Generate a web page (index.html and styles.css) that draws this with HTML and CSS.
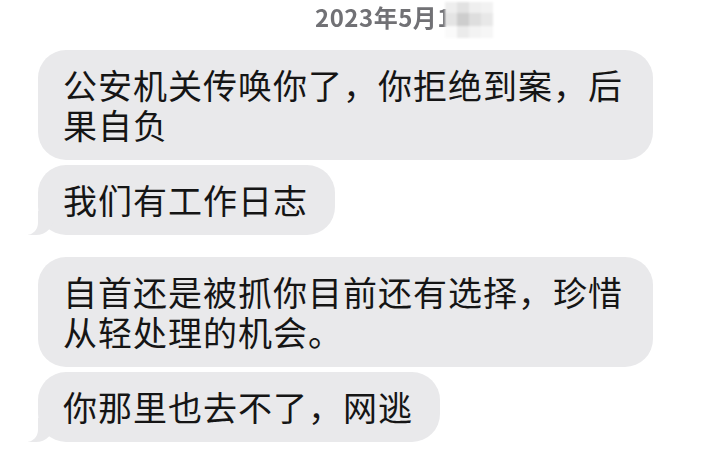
FILE: index.html
```html
<!DOCTYPE html>
<html lang="zh-CN">
<head>
<meta charset="utf-8">
<link rel="stylesheet" href="styles.css">
</head>
<body>
<div class="screen">
  <div class="stamp-row">
    <div class="stamp">
      <span class="stamp-text">2023年5月1</span>
      <div class="mosaic">
        <i class="m1"></i><i class="m2"></i><i class="m3"></i><i class="m4"></i>
        <i class="m5"></i><i class="m6"></i><i class="m7"></i><i class="m8"></i>
        <i class="m9"></i><i class="m10"></i><i class="m11"></i><i class="m12"></i>
      </div>
    </div>
  </div>
  <div class="thread">
    <div class="group">
      <div class="bubble">公安机关传唤你了，你拒绝到案，后果自负</div>
      <div class="bubble tail">我们有工作日志</div>
    </div>
    <div class="group">
      <div class="bubble">自首还是被抓你目前还有选择，珍惜从轻处理的机会。</div>
      <div class="bubble tail">你那里也去不了，网逃</div>
    </div>
  </div>
</div>
</body>
</html>
```
FILE: styles.css
```css
* { box-sizing: content-box; }
html, body {
  margin: 0;
  padding: 0;
  background: #ffffff;
}
body {
  font-family: "Noto Sans CJK SC", "Noto Sans", sans-serif;
  width: 708px;
  height: 462px;
  overflow: hidden;
}
.screen {
  display: flex;
  flex-direction: column;
}
.stamp-row {
  display: flex;
  padding-left: 315px;
  height: 50px;
}
.stamp {
  position: relative;
  height: 40px;
}
.stamp-text {
  display: block;
  font-size: 24px;
  line-height: 34px;
  color: #717175;
  font-weight: 700;
  letter-spacing: 0.5px;
  filter: blur(0.5px);
}
.mosaic {
  position: absolute;
  left: 130px;
  top: 2px;
  display: grid;
  grid-template-columns: repeat(4, 12px);
  grid-template-rows: 11px 13px 12px;
  filter: blur(0.8px);
}
.mosaic i { display: block; }
.m1 { background: #eeeeee; }
.m2 { background: #e2e2e2; }
.m3 { background: #efefef; }
.m4 { background: #f2f2f2; }
.m5 { background: #e4e4e4; }
.m6 { background: #cdcdcd; }
.m7 { background: #dedede; }
.m8 { background: #e8e8e8; }
.m9 { background: #fafafa; }
.m10 { background: #ebebeb; }
.m11 { background: #f3f3f3; }
.m12 { background: #f6f6f6; }

.thread {
  display: flex;
  flex-direction: column;
  gap: 22px;
  padding-left: 38px;
}
.group {
  display: flex;
  flex-direction: column;
  align-items: flex-start;
  gap: 5px;
}
.bubble {
  position: relative;
  max-width: 563px;
  padding: 15px 27px 15px 25px;
  background: #e9e9eb;
  border-radius: 28px;
  font-size: 34px;
  line-height: 40px;
  letter-spacing: 1px;
  color: #151515;
}
.bubble.tail::before {
  content: "";
  position: absolute;
  bottom: 0;
  left: -10px;
  width: 26px;
  height: 24px;
  background: #e9e9eb;
  border-bottom-right-radius: 18px;
}
.bubble.tail::after {
  content: "";
  position: absolute;
  bottom: 0;
  left: -14px;
  width: 14px;
  height: 24px;
  background: #ffffff;
  border-bottom-right-radius: 12px;
}
```
